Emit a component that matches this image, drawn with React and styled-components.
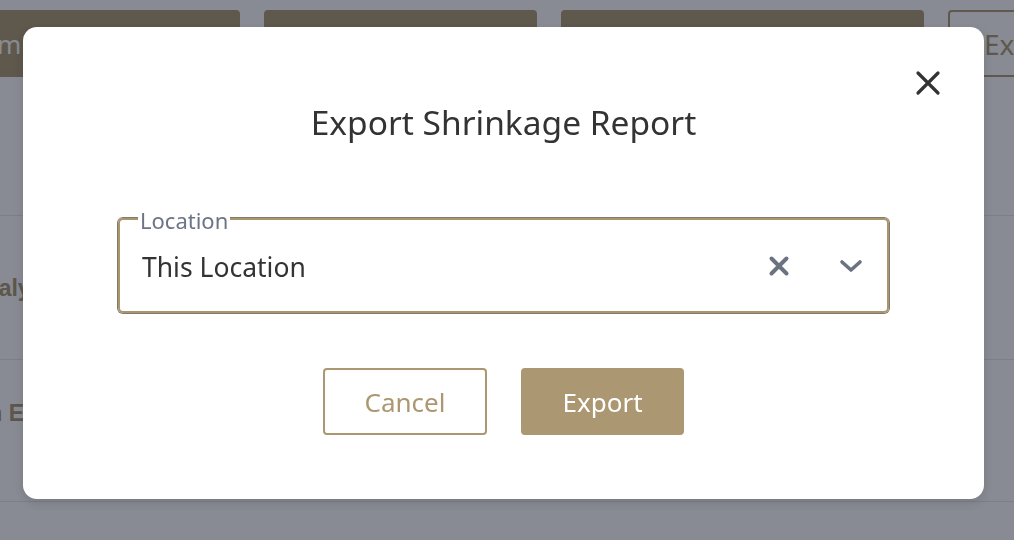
import React from "react";
import styled, { createGlobalStyle } from "styled-components";

const GOLD = "#ab9872";

const Global = createGlobalStyle`
  html, body { margin: 0; padding: 0; }
  body {
    width: 1014px;
    height: 540px;
    overflow: hidden;
    background: #ffffff;
    font-family: "Segoe UI", "Noto Sans", "Open Sans", sans-serif;
  }
`;

/* ---------- page behind the dialog ---------- */

const Page = styled.div`
  width: 1014px;
  height: 540px;
  overflow: hidden;
  background: #ffffff;
`;

const Toolbar = styled.div`
  display: flex;
  gap: 24px;
  padding-top: 10px;
  margin-left: -80px;
`;

const ToolButton = styled.div`
  box-sizing: border-box;
  flex: 0 0 ${(p) => p.$w}px;
  height: 67px;
  display: flex;
  align-items: center;
  padding-left: ${(p) => p.$pad}px;
  border-radius: 4px;
  font-size: ${(p) => (p.$outline ? 28 : 26)}px;
  white-space: nowrap;
  overflow: hidden;
  color: ${(p) => (p.$outline ? GOLD : "#ffffff")};
  background: ${(p) => (p.$outline ? "#ffffff" : GOLD)};
  border: 2px solid ${GOLD};
`;

const Rows = styled.div`
  margin-top: 138px;
  border-top: 1px solid #e5e7eb;
`;

const Row = styled.div`
  height: ${(p) => p.$h}px;
  box-sizing: border-box;
  display: flex;
  align-items: ${(p) => (p.$top ? "flex-start" : "center")};
  padding-top: ${(p) => p.$top || 0}px;
  margin-left: ${(p) => p.$shift}px;
  border-bottom: 1px solid #e5e7eb;
  font-size: 23px;
  line-height: 28px;
  font-weight: 700;
  color: #a8956f;
  white-space: nowrap;
  font-family: "Liberation Sans", Arial, sans-serif;
`;

/* ---------- dialog ---------- */

const Backdrop = styled.div`
  position: fixed;
  inset: 0;
  background: rgba(17, 24, 39, 0.5);
`;

const Dialog = styled.div`
  position: fixed;
  left: 23px;
  top: 27px;
  width: 961px;
  height: 472px;
  box-sizing: border-box;
  background: #ffffff;
  border-radius: 14px;
  box-shadow: 0 4px 10px rgba(0, 0, 0, 0.12);
  padding: 73px 95px 0;
  display: flex;
  flex-direction: column;
`;

const CloseButton = styled.button`
  position: absolute;
  top: 40px;
  right: 40px;
  width: 32px;
  height: 32px;
  padding: 0;
  border: none;
  background: none;
  display: flex;
  align-items: center;
  justify-content: center;
  cursor: pointer;
`;

const Title = styled.h2`
  margin: 0;
  text-align: center;
  font-size: 33.5px;
  line-height: 44px;
  font-weight: 400;
  color: #333333;
`;

const Field = styled.div`
  position: relative;
  margin-top: 74px;
  height: 95px;
  box-sizing: border-box;
  border: 2px solid #a9966f;
  border-radius: 5px;
  box-shadow: 0 0 0 1px #857a69;
  display: flex;
  align-items: center;
  padding: 0 22px 0 22px;
`;

const FieldLabel = styled.span`
  position: absolute;
  top: -13px;
  left: 18px;
  padding: 0 2px;
  background: #ffffff;
  font-size: 22px;
  line-height: 26px;
  color: #6b7586;
`;

const Value = styled.span`
  flex: 1;
  font-size: 26.5px;
  color: #333333;
  padding-top: 2px;
`;

const IconSlot = styled.span`
  display: flex;
  align-items: center;
  justify-content: center;
  width: 28px;
  height: 28px;
  margin-left: ${(p) => p.$gap}px;
`;

const Actions = styled.div`
  display: flex;
  justify-content: center;
  gap: 34px;
  margin-top: 55px;
`;

const Button = styled.button`
  box-sizing: border-box;
  width: ${(p) => p.$w}px;
  height: 67px;
  border-radius: 4px;
  border: 2px solid ${GOLD};
  background: ${(p) => (p.$primary ? GOLD : "#ffffff")};
  color: ${(p) => (p.$primary ? "#ffffff" : GOLD)};
  font-family: inherit;
  font-size: 26px;
  cursor: pointer;
`;

const CloseIcon = () => (
  <svg width="26" height="26" viewBox="0 0 26 26" fill="none">
    <path d="M3 3 L23 23 M23 3 L3 23" stroke="#333333" strokeWidth="3.2" strokeLinecap="round" />
  </svg>
);

const ClearIcon = () => (
  <svg width="22" height="22" viewBox="0 0 22 22" fill="none">
    <path d="M3.5 3.5 L18.5 18.5 M18.5 3.5 L3.5 18.5" stroke="#6b7280" strokeWidth="4" strokeLinecap="round" />
  </svg>
);

const ChevronIcon = () => (
  <svg width="24" height="14" viewBox="0 0 24 14" fill="none">
    <path d="M3 3 L12 11 L21 3" stroke="#6b7280" strokeWidth="3.6" strokeLinecap="round" strokeLinejoin="round" />
  </svg>
);

export default function App() {
  return (
    <>
      <Global />
      <Page>
        <Toolbar>
          <ToolButton $w={320} $pad={5}>Custom Range</ToolButton>
          <ToolButton $w={273} $pad={20}>Summary</ToolButton>
          <ToolButton $w={363} $pad={20}>Compare Periods</ToolButton>
          <ToolButton $w={200} $pad={34} $outline>Export</ToolButton>
        </Toolbar>
        <Rows>
          <Row $h={144} $shift={-32}>Analytics</Row>
          <Row $h={142} $shift={-50} $top={39}>Main Entrance</Row>
        </Rows>
      </Page>
      <Backdrop />
      <Dialog role="dialog" aria-label="Export Shrinkage Report">
        <CloseButton aria-label="Close">
          <CloseIcon />
        </CloseButton>
        <Title>Export Shrinkage Report</Title>
        <Field>
          <FieldLabel>Location</FieldLabel>
          <Value>This Location</Value>
          <IconSlot $gap={0}>
            <ClearIcon />
          </IconSlot>
          <IconSlot $gap={44}>
            <ChevronIcon />
          </IconSlot>
        </Field>
        <Actions>
          <Button $w={164}>Cancel</Button>
          <Button $w={163} $primary>Export</Button>
        </Actions>
      </Dialog>
    </>
  );
}
